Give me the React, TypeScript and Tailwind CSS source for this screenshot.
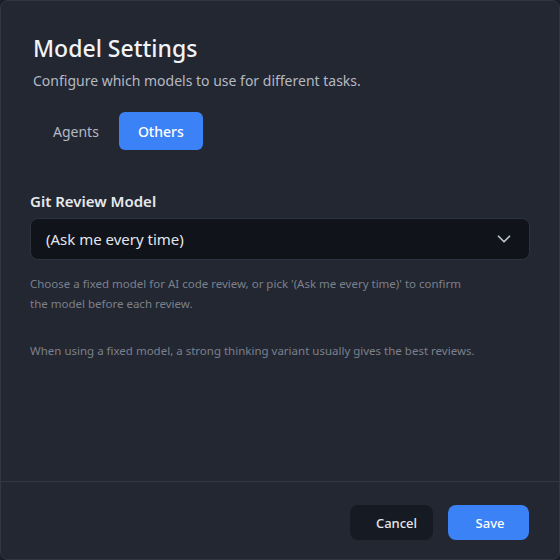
import { ChevronDown } from "lucide-react";

export default function App() {
  return (
    <div
      className="w-[560px] h-[560px] bg-[#1b1e26] text-white"
      style={{ fontFamily: '"Noto Sans", "Open Sans", sans-serif' }}
    >
      <div className="w-full h-full flex flex-col bg-[#232731] border border-[#323745] rounded-lg overflow-hidden">
        {/* Header */}
        <div className="pl-8 pr-8 pt-[32px]">
          <h1 className="text-[23px] leading-[30px] font-medium text-[#f1f3f7]">Model Settings</h1>
          <p className="mt-[8px] text-[14px] leading-5 text-[#b4b9c4]">
            Configure which models to use for different tasks.
          </p>
          <div className="mt-[21px] flex items-center">
            <button className="px-5 h-[38px] text-[14px] text-[#b4b9c4]">Agents</button>
            <button className="px-[19px] h-[38px] rounded-md bg-[#3b82f6] text-[14px] font-medium text-white">
              Others
            </button>
          </div>
        </div>

        {/* Body */}
        <div className="px-[29px] pt-[39px] flex-1">
          <label className="block text-[15px] leading-6 font-semibold text-[#e7e9ee]">Git Review Model</label>
          <div className="mt-[5px] h-[42px] flex items-center justify-between pl-[15px] pr-[14px] bg-[#10131a] border border-[#2e3341] rounded-lg">
            <span className="text-[15px] text-[#e3e6ec]">(Ask me every time)</span>
            <ChevronDown size={22} strokeWidth={1.8} className="text-[#c0c5d0]" />
          </div>
          <p className="mt-[14px] max-w-[446px] text-[11.5px] leading-5 text-[#7b808c]">
            Choose a fixed model for AI code review, or pick '(Ask me every time)' to confirm the model before each review.
          </p>
          <p className="mt-[27px] text-[11.5px] leading-5 text-[#7b808c]">
            When using a fixed model, a strong thinking variant usually gives the best reviews.
          </p>
        </div>

        {/* Footer */}
        <div className="h-[78px] border-t border-[#323745] flex items-center justify-end gap-[15px] pr-[30px] pt-[3px]">
          <button className="w-[83px] h-[35px] pl-[10px] pt-[3px] rounded-lg bg-[#161a22] text-[13px] font-medium text-[#e3e6ec]">
            Cancel
          </button>
          <button className="w-[81px] h-[35px] pl-[3px] pt-[3px] rounded-lg bg-[#3b82f6] text-[13px] font-medium text-white">
            Save
          </button>
        </div>
      </div>
    </div>
  );
}
